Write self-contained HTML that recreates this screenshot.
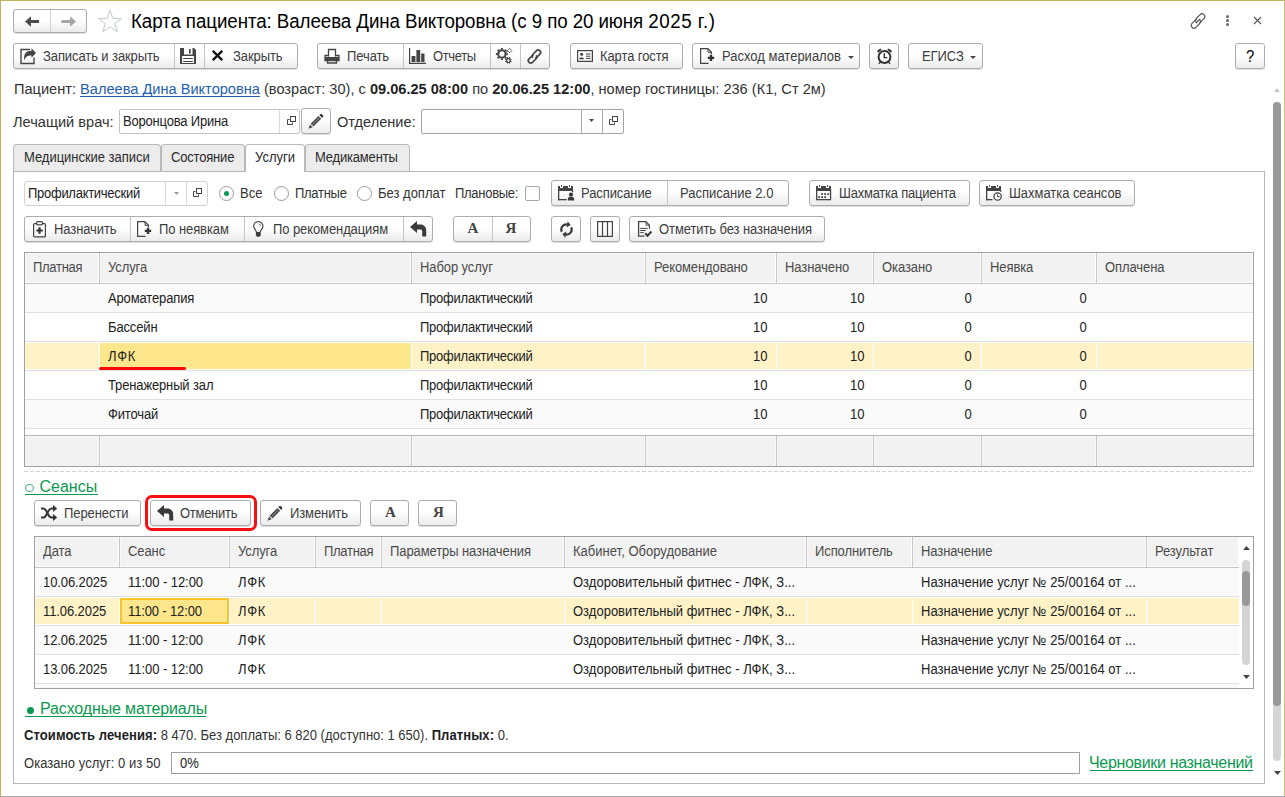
<!DOCTYPE html>
<html lang="ru">
<head>
<meta charset="utf-8">
<title>Карта пациента</title>
<style>
*{box-sizing:border-box;margin:0;padding:0}
html,body{width:1285px;height:797px;overflow:hidden;background:#fff}
body{position:relative;font-family:"Liberation Sans",sans-serif;font-size:13px;color:#333;line-height:1}
.a{position:absolute;white-space:nowrap}
.frame-t{left:0;top:0;width:1285px;height:1px;background:#c1b15c}
.frame-l{left:0;top:0;width:1px;height:797px;background:#c1b15c}
.frame-r{left:1284px;top:0;width:1px;height:796px;background:#cdbf72}
.frame-b{left:0;top:796px;width:1285px;height:1px;background:#a8a8a8}
.b{position:absolute;height:26px;border:1px solid #adadad;border-radius:3px;background:linear-gradient(#fff 0%,#fff 45%,#ebebeb 100%);box-shadow:0 1px 0 rgba(0,0,0,.13);white-space:nowrap}
.b .t{position:absolute;top:5px;font-size:14px;transform:scaleX(.9286);transform-origin:0 0;color:#3c3c3c;letter-spacing:-0.1px}
.b .sep{position:absolute;top:0;width:1px;height:24px;background:#c4c4c4}
.b svg{position:absolute}
.lbl15{font-size:15.4px;transform:scaleX(.948);transform-origin:0 0;color:#333}
.inp{position:absolute;height:25px;border:1px solid #c3c3c3;border-radius:2px;background:#fff}
.inp .t{position:absolute;left:3px;top:4px;font-size:14px;transform:scaleX(.9286);transform-origin:0 0;color:#222;letter-spacing:-0.2px}
.inp .sep{position:absolute;top:0;width:1px;height:23px;background:#dcdcdc}
.tab{position:absolute;top:144px;height:27px;border:1px solid #b9b9b9;border-bottom:none;background:#ececec;font-size:14px;color:#2a2a2a;border-radius:4px 4px 0 0;letter-spacing:-0.2px}
.tab span{position:absolute;white-space:nowrap;top:5px;transform:scaleX(.9286);transform-origin:0 0}
.tab.act{background:#fff;height:28px;z-index:3}
.panel{left:13px;top:171px;width:1252px;height:613px;border:1px solid #b6b6b6}
 .tbl{position:absolute;border:1px solid #a0a0a0;background:#fff;overflow:hidden}
.th{position:absolute;top:0;height:31px;background:#f2f2f2;border-right:1px solid #c6c6c6;border-bottom:1px solid #c6c6c6;box-shadow:inset -1px -1px 0 #fff,inset 1px 1px 0 #f8f8f8;font-size:14px;color:#4a4a4a}
.th span{position:absolute;white-space:nowrap;top:7px;transform:scaleX(.9286);transform-origin:0 0;letter-spacing:-0.1px}
.row{position:absolute;left:0;height:29px;border-bottom:1px solid #e0e0e0}
.row.alt{background:#fafafa}
.c{position:absolute;top:0;height:28px;font-size:14px;letter-spacing:-0.15px;color:#222}
.c span{position:absolute;white-space:nowrap;top:7px;transform:scaleX(.9286);transform-origin:0 0}
.sel .c{top:1px;height:26px;background:#fef2c6}
.sel .c span{top:6px}
.sel .c.cur{background:#fee68d}
.lnk{color:#0a9a4f;font-size:16px}
</style>
</head>
<body>
<div class="a frame-t"></div><div class="a frame-l"></div><div class="a frame-r"></div><div class="a frame-b"></div>
<!--TOP-->
<div class="b" style="left:13px;top:9px;width:74px;height:24px">
  <div class="sep" style="left:36px;height:22px;background:#d2d2d2"></div>
  <svg style="left:11px;top:5.500px" width="15" height="11" viewBox="0 0 15 11"><path d="M0 5.500L6 0.300V4H14V7H6V10.700Z" fill="#4a4a4a"/></svg>
  <svg style="left:46.500px;top:5.500px" width="15" height="11" viewBox="0 0 15 11"><path d="M15 5.5L9 0.3V4H0.5V7H9V10.7Z" fill="#a6a6a6"/></svg>
</div>
<svg class="a" style="left:96.5px;top:9px" width="26" height="25" viewBox="0 0 26 25"><path d="M13 1.5L16 9.6H24.3L17.6 14.6L20.2 22.8L13 17.8L5.8 22.8L8.4 14.6L1.7 9.6H10Z" fill="none" stroke="#c3c8cc" stroke-width="1"/></svg>
<div class="a" style="left:131px;top:12px;font-size:19.6px;transform:scaleX(.9566);transform-origin:0 0;color:#000"><span style="letter-spacing:-0.085px">Карта пациента: Валеева Дина Викторовна (с 9 по 20 июня </span><span style="letter-spacing:0.55px">2025 г.)</span></div>
<!-- window icons -->
<svg class="a" style="left:1188.500px;top:11.500px;overflow:visible" width="18" height="18" viewBox="0 0 17 17"><g transform="rotate(-45 8.500 8.500)" fill="none" stroke="#555" stroke-width="1.100" stroke-linecap="round"><path d="M8.600 6.100H2.900a2.600 2.600 0 0 0 0 5.200H8a2.600 2.600 0 0 0 2.500-1.900"/><path d="M8.400 10.900H14.100a2.600 2.600 0 0 0 0-5.200H9a2.600 2.600 0 0 0-2.500 1.900"/><path d="M6.200 8.500H10.800"/></g></svg>
<div class="a" style="left:1226px;top:15px;width:3px;height:3px;border-radius:2px;background:#666"></div>
<div class="a" style="left:1226px;top:19px;width:3px;height:3px;border-radius:2px;background:#666"></div>
<div class="a" style="left:1226px;top:23px;width:3px;height:3px;border-radius:2px;background:#666"></div>
<svg class="a" style="left:1253px;top:16px" width="9" height="9" viewBox="0 0 9 9"><path d="M1 1L8 8M8 1L1 8" stroke="#555" stroke-width="1.1" fill="none"/></svg>

<!-- toolbar -->
<div class="b" style="left:13px;top:43px;width:285px">
  <svg style="left:6px;top:4px" width="17" height="17" viewBox="0 0 17 17"><path d="M10 1.5H1V15.5H14V9.5" fill="none" stroke="#444" stroke-width="1.4"/><path d="M16 5L11.5 0.3V2.700C6.500 2.700 3.300 5.500 4.300 12.500C5.500 8.800 7.500 7.500 11.500 7.500V9.700Z" fill="#444"/></svg>
  <span class="t" style="left:29px">Записать и закрыть</span>
  <div class="sep" style="left:160px"></div>
  <svg style="left:166px;top:4px" width="16" height="16" viewBox="0 0 16 16"><path d="M0 0H14L16 2V16H0Z" fill="#444"/><rect x="4" y="0" width="8.500" height="6.500" fill="#fff"/><rect x="9" y="1" width="1.700" height="4.500" fill="#444"/><rect x="2" y="8" width="12" height="7" fill="#fff"/><rect x="3.200" y="10" width="9.600" height="1" fill="#444"/><rect x="3.200" y="13" width="9.600" height="1" fill="#444"/></svg>
  <div class="sep" style="left:190px"></div>
  <svg style="left:198px;top:6px" width="11" height="11" viewBox="0 0 11 11"><path d="M0.800 0.800L10.200 10.200M10.200 0.800L0.800 10.200" stroke="#111" stroke-width="2.300" fill="none"/></svg>
  <span class="t" style="left:219px">Закрыть</span>
</div>
<div class="b" style="left:317px;top:43px;width:233px">
  <svg style="left:6px;top:4px" width="16" height="16" viewBox="0 0 16 16"><g fill="none" stroke="#444" stroke-width="1.3"><path d="M4.5 8.5V1.5H11.5V8.5"/><path d="M4.5 7.5H1V12.5H15V7.5H11.5" /><path d="M3.5 12.5V15H12.5V12.5"/></g><rect x="1" y="9" width="14" height="3.5" fill="#444"/></svg>
  <span class="t" style="left:29px">Печать</span>
  <div class="sep" style="left:85px"></div>
  <svg style="left:91px;top:4px" width="17" height="16" viewBox="0 0 17 16"><path d="M0.600 0V15.400H17" fill="none" stroke="#444" stroke-width="1.200"/><rect x="2.600" y="8" width="3.800" height="6" fill="#444"/><rect x="7.400" y="2" width="3.800" height="12" fill="#444"/><rect x="12.200" y="5.500" width="3.300" height="8.500" fill="#444"/></svg>
  <span class="t" style="left:114.500px;letter-spacing:-0.400px">Отчеты</span>
  <div class="sep" style="left:172px"></div>
  <svg style="left:177px;top:4px" width="19" height="17" viewBox="0 0 19 17"><circle cx="6.9" cy="6" r="3.7" fill="none" stroke="#444" stroke-width="2.1"/><path d="M11.30 6.00L12.90 6.00M10.01 9.11L11.14 10.24M6.90 10.40L6.90 12.00M3.79 9.11L2.66 10.24M2.50 6.00L0.90 6.00M3.79 2.89L2.66 1.76M6.90 1.60L6.90 0.00M10.01 2.89L11.14 1.76" stroke="#444" stroke-width="2.0" fill="none"/><circle cx="13.4" cy="12.4" r="1.9" fill="none" stroke="#444" stroke-width="1.3"/><path d="M15.52 13.28L16.54 13.70M14.28 14.52L14.70 15.54M12.52 14.52L12.10 15.54M11.28 13.28L10.26 13.70M11.28 11.52L10.26 11.10M12.52 10.28L12.10 9.26M14.28 10.28L14.70 9.26M15.52 11.52L16.54 11.10" stroke="#444" stroke-width="1.1" fill="none"/><path d="M14.7 0.4L16.9 2.6L14.7 4.8L12.5 2.6Z" fill="none" stroke="#555" stroke-width="0.9"/><path d="M10 4.6L12.8 3" stroke="#444" stroke-width="1"/></svg>
  <div class="sep" style="left:202px"></div>
  <svg style="left:208px;top:4px;overflow:visible" width="17" height="17" viewBox="0 0 17 17"><g transform="rotate(-45 8.500 8.500)" fill="none" stroke="#444" stroke-width="1.700" stroke-linecap="round"><path d="M8.600 6.400H2.900a2.400 2.400 0 0 0 0 4.800H8a2.400 2.400 0 0 0 2.300-1.800"/><path d="M8.400 10.600H14.100a2.400 2.400 0 0 0 0-4.800H9a2.400 2.400 0 0 0-2.300 1.800"/></g></svg>
</div>
<div class="b" style="left:570px;top:43px;width:113px">
  <svg style="left:6px;top:6px" width="16" height="12" viewBox="0 0 16 12"><rect x="0.6" y="0.6" width="14.8" height="10.8" fill="none" stroke="#444" stroke-width="1.2"/><circle cx="4.6" cy="4.3" r="1.5" fill="#444"/><path d="M2.2 9.2C2.2 6.8 7 6.8 7 9.2Z" fill="#444"/><path d="M9 4H13.5M9 6.2H13.5M9 8.4H13.5" stroke="#444" stroke-width="1"/></svg>
  <span class="t" style="left:29px">Карта гостя</span>
</div>
<div class="b" style="left:692px;top:43px;width:168px">
  <svg style="left:7px;top:4px" width="15" height="17" viewBox="0 0 15 17"><path d="M8 0.600H0.600V15.400H8.500" fill="none" stroke="#444" stroke-width="1.200"/><path d="M8 0.600L11.400 4.300V6.300" fill="none" stroke="#444" stroke-width="1.200"/><path d="M8 0.600V4.300H11.400" fill="none" stroke="#444" stroke-width="1"/><path d="M11 6.700V13.100M7.800 9.900H14.200" stroke="#333" stroke-width="2.400"/></svg>
  <span class="t" style="left:29px;letter-spacing:0">Расход материалов</span>
  <svg style="left:154.500px;top:11.500px" width="6" height="3" viewBox="0 0 6 3"><path d="M0 0H6L3 3Z" fill="#444"/></svg>
</div>
<div class="b" style="left:869px;top:43px;width:30px">
  <svg style="left:5.500px;top:4px" width="17" height="17" viewBox="0 0 17 17"><circle cx="8.500" cy="9" r="5.900" fill="none" stroke="#333" stroke-width="2"/><path d="M8.300 5.300V9.600H11.300" fill="none" stroke="#333" stroke-width="1.400"/><path d="M1.800 4.200Q2.800 1.800 5.300 1.500M15.200 4.200Q14.200 1.800 11.700 1.500" stroke="#333" stroke-width="2.200" fill="none"/><path d="M4.600 13.600L3 15.800M12.400 13.600L14 15.800" stroke="#333" stroke-width="1.300"/></svg>
</div>
<div class="b" style="left:908px;top:43px;width:75px">
  <span class="t" style="left:13px">ЕГИСЗ</span>
  <svg style="left:60.500px;top:11.500px" width="6" height="3" viewBox="0 0 6 3"><path d="M0 0H6L3 3Z" fill="#444"/></svg>
</div>
<div class="b" style="left:1235px;top:43px;width:30px">
  <span class="t" style="left:10px;top:5px;font-size:16px;color:#000;letter-spacing:0">?</span>
</div>

<!--FORM-->
<div class="a" style="left:14px;top:81px;font-size:15.4px;transform:scaleX(.948);transform-origin:0 0;color:#333">Пациент: <span style="color:#1f5fb0;text-decoration:underline;text-decoration-skip-ink:none;text-decoration-thickness:1px;text-underline-offset:2px">Валеева Дина Викторовна</span> (возраст: 30), с <b style="color:#222">09.06.25 08:00</b> по <b style="color:#222">20.06.25 12:00</b>, номер гостиницы: 236 (К1, Ст 2м)</div>
<div class="a lbl15" style="left:13px;top:114px">Лечащий врач:</div>
<div class="inp" style="left:119px;top:109px;width:181px">
  <span class="t">Воронцова Ирина</span>
  <div class="sep" style="left:159px"></div>
  <svg style="position:absolute;left:167px;top:6px" width="10" height="10" viewBox="0 0 10 10"><rect x="3.5" y="0.5" width="5" height="5" fill="none" stroke="#444" stroke-width="1"/><path d="M2.5 3.5H0.5V8.5H5.5V6.5" fill="none" stroke="#444" stroke-width="1"/></svg>
</div>
<div class="b" style="left:301px;top:108px;width:30px">
  <svg style="left:5px;top:4px" width="17" height="17" viewBox="0 0 17 17"><path d="M3.600 10.800L11.400 3L14.200 5.800L6.400 13.600Z" fill="#4a4a4a"/><path d="M5.300 11.900L12.500 4.700" stroke="#a8a8a8" stroke-width="0.800"/><path d="M3 11.600L5.600 14.200L1.500 15.700Z" fill="#4a4a4a"/><path d="M12.300 2.100L13.200 1.200a1.200 1.200 0 0 1 1.700 0L16 2.300a1.200 1.200 0 0 1 0 1.700L15.100 4.900Z" fill="#3a3a3a"/></svg>
</div>
<div class="a lbl15" style="left:337px;top:114px">Отделение:</div>
<div class="inp" style="left:421px;top:109px;width:203px;border-color:#a3a3a3">
  <div class="sep" style="left:159px;background:#a9a9a9"></div>
  <svg style="position:absolute;left:167px;top:9px" width="5" height="3" viewBox="0 0 5 3"><path d="M0 0H5L2.5 3Z" fill="#444"/></svg>
  <div class="sep" style="left:180px;background:#a9a9a9"></div>
  <svg style="position:absolute;left:187px;top:6px" width="10" height="10" viewBox="0 0 10 10"><rect x="3.5" y="0.5" width="5" height="5" fill="none" stroke="#444" stroke-width="1"/><path d="M2.5 3.5H0.5V8.5H5.5V6.5" fill="none" stroke="#444" stroke-width="1"/></svg>
</div>

<!--TABS-->
<div class="a panel"></div>
<div class="tab" style="left:13px;width:148px"><span style="left:10px;letter-spacing:-0.03px">Медицинские записи</span></div>
<div class="tab" style="left:161px;width:84px"><span style="left:9px">Состояние</span></div>
<div class="tab act" style="left:245px;width:60px"><span style="left:9px;letter-spacing:0">Услуги</span></div>
<div class="tab" style="left:305px;width:105px"><span style="left:9px">Медикаменты</span></div>

<!-- filter row -->
<div class="inp" style="left:24px;top:181px;width:184px;border-color:#d2d2d2;border-radius:3px">
  <span class="t" style="left:3px;letter-spacing:-0.3px">Профилактический</span>
  <div class="sep" style="left:140px"></div>
  <svg style="position:absolute;left:149px;top:10px" width="5" height="3" viewBox="0 0 5 3"><path d="M0 0H5L2.5 3Z" fill="#9a9a9a"/></svg>
  <div class="sep" style="left:161px"></div>
  <svg style="position:absolute;left:168px;top:6px" width="10" height="10" viewBox="0 0 10 10"><rect x="3.5" y="0.5" width="5" height="5" fill="none" stroke="#444" stroke-width="1"/><path d="M2.5 3.5H0.5V8.5H5.5V6.5" fill="none" stroke="#444" stroke-width="1"/></svg>
</div>
<div class="a" style="left:219px;top:186px;width:15px;height:15px;border:1px solid #9a9a9a;border-radius:8px;background:#fff"></div>
<div class="a" style="left:224px;top:191px;width:5px;height:5px;border-radius:3px;background:#0a9a4f"></div>
<div class="a" style="left:240px;top:186px;font-size:14px;transform:scaleX(.9286);transform-origin:0 0;color:#333">Все</div>
<div class="a" style="left:274px;top:186px;width:15px;height:15px;border:1px solid #9a9a9a;border-radius:8px;background:#fff"></div>
<div class="a" style="left:295px;top:186px;font-size:14px;transform:scaleX(.9286);transform-origin:0 0;color:#333;letter-spacing:-0.3px">Платные</div>
<div class="a" style="left:357px;top:186px;width:15px;height:15px;border:1px solid #9a9a9a;border-radius:8px;background:#fff"></div>
<div class="a" style="left:378px;top:186px;font-size:14px;transform:scaleX(.9286);transform-origin:0 0;color:#333">Без доплат</div>
<div class="a" style="left:455px;top:186px;font-size:14px;transform:scaleX(.9286);transform-origin:0 0;color:#333;letter-spacing:-0.3px">Плановые:</div>
<div class="a" style="left:525px;top:186px;width:15px;height:15px;border:1px solid #a6a6a6;border-radius:2px;background:#fff"></div>
<div class="b" style="left:551px;top:180px;width:238px">
  <svg style="left:6px;top:4px;overflow:visible" width="17" height="16" viewBox="0 0 17 16"><g shape-rendering="crispEdges"><path d="M0 1H2V3H5V1H10V3H13V1H15V5.500H0Z" fill="#444"/><rect x="3" y="0" width="1" height="2" fill="#555"/><rect x="11" y="0" width="1" height="2" fill="#555"/></g><rect x="0" y="5" width="1.300" height="10.300" fill="#444"/><rect x="0" y="14" width="8.800" height="1.300" fill="#444"/><rect x="13.900" y="5" width="1.300" height="2.300" fill="#444"/><circle cx="13" cy="9.700" r="2.100" fill="#3a3a3a"/><path d="M9.900 15.600V13.800Q9.900 12.100 11.600 12.100H14.400Q16.100 12.100 16.100 13.800V15.600Z" fill="#3a3a3a"/></svg>
  <span class="t" style="left:29px">Расписание</span>
  <div class="sep" style="left:115px"></div>
  <span class="t" style="left:128px;letter-spacing:0">Расписание 2.0</span>
</div>
<div class="b" style="left:809px;top:180px;width:161px">
  <svg style="left:6px;top:4px;overflow:visible" width="16" height="16" viewBox="0 0 16 16"><g shape-rendering="crispEdges"><path d="M0 1H2V3H5V1H10V3H13V1H15V5.500H0Z" fill="#444"/><rect x="3" y="0" width="1" height="2" fill="#555"/><rect x="11" y="0" width="1" height="2" fill="#555"/></g><rect x="0.650" y="5" width="13.900" height="9.650" fill="none" stroke="#444" stroke-width="1.300"/><rect x="5.2" y="8.2" width="1.700" height="1.700" fill="#333"/><rect x="8.3" y="8.2" width="1.700" height="1.700" fill="#333"/><rect x="11.4" y="8.2" width="1.700" height="1.700" fill="#333"/><rect x="2.3" y="11.3" width="1.700" height="1.700" fill="#333"/><rect x="5.2" y="11.3" width="1.700" height="1.700" fill="#333"/><rect x="8.3" y="11.3" width="1.700" height="1.700" fill="#333"/></svg>
  <span class="t" style="left:29px;letter-spacing:-0.25px">Шахматка пациента</span>
</div>
<div class="b" style="left:979px;top:180px;width:156px">
  <svg style="left:6px;top:4px;overflow:visible" width="17" height="17" viewBox="0 0 17 17"><g shape-rendering="crispEdges"><path d="M0 1H2V3H5V1H10V3H13V1H15V5.500H0Z" fill="#444"/><rect x="3" y="0" width="1" height="2" fill="#555"/><rect x="11" y="0" width="1" height="2" fill="#555"/></g><rect x="0" y="5" width="1.300" height="10.300" fill="#444"/><rect x="0" y="14" width="6.600" height="1.300" fill="#444"/><rect x="13.900" y="5" width="1.300" height="1.800" fill="#444"/><circle cx="11.600" cy="11.500" r="3.700" fill="#fff" fill-opacity="0.600" stroke="#3a3a3a" stroke-width="1.200"/><path d="M11.600 9.300V11.700H13.600" fill="none" stroke="#3a3a3a" stroke-width="1"/></svg>
  <span class="t" style="left:29px;letter-spacing:-0.05px">Шахматка сеансов</span>
</div>

<!-- action row -->
<div class="b" style="left:24px;top:216px;width:409px">
  <svg style="left:8px;top:4px" width="13" height="17" viewBox="0 0 13 17"><rect x="0.600" y="2.600" width="11.800" height="13.300" rx="1" fill="none" stroke="#444" stroke-width="1.200"/><rect x="3.600" y="0.600" width="5.800" height="3.200" rx="1" fill="#fff" stroke="#444" stroke-width="1.200"/><path d="M6.500 6.300V12.700M3.300 9.500H9.700" stroke="#333" stroke-width="2.200"/></svg>
  <span class="t" style="left:29px">Назначить</span>
  <div class="sep" style="left:105px"></div>
  <svg style="left:112px;top:4px" width="15" height="17" viewBox="0 0 15 17"><path d="M8 0.600H0.600V15.400H8.500" fill="none" stroke="#444" stroke-width="1.200"/><path d="M8 0.600L11.400 4.300V6.300" fill="none" stroke="#444" stroke-width="1.200"/><path d="M8 0.600V4.300H11.400" fill="none" stroke="#444" stroke-width="1"/><path d="M11 6.700V13.100M7.800 9.900H14.200" stroke="#333" stroke-width="2.400"/></svg>
  <span class="t" style="left:134px">По неявкам</span>
  <div class="sep" style="left:219px"></div>
  <svg style="left:227.500px;top:3.500px;overflow:visible" width="11" height="17" viewBox="0 0 11 17"><path d="M3.300 11.200C3.300 8.800 0.700 8 0.700 5.200A4.600 4.600 0 0 1 9.900 5.200C9.900 8 7.300 8.800 7.300 11.200" fill="none" stroke="#444" stroke-width="1.200"/><path d="M2.900 11H7.700V14.200L6.500 15.800H4.100L2.900 14.200Z" fill="#3c3c3c"/><path d="M5.900 2.600L7.700 4.800" stroke="#555" stroke-width="0.900" fill="none"/></svg>
  <span class="t" style="left:248px">По рекомендациям</span>
  <div class="sep" style="left:378px"></div>
  <svg style="left:384.500px;top:3.500px;overflow:visible" width="17" height="16" viewBox="0 0 17 16"><path d="M0 6L7 0V3.400H10.500C14 3.400 16.200 5.800 16.200 9.500V15.500H12.200V10.200C12.200 9 11.400 8.400 10.300 8.400H7V12Z" fill="#3a3a3a"/></svg>
</div>
<div class="b" style="left:453px;top:216px;width:78px">
  <span class="t" style="left:13.500px;top:4px;font-family:'Liberation Serif',serif;font-weight:bold;font-size:15px;transform:none;letter-spacing:0;color:#444">А</span>
  <div class="sep" style="left:38px"></div>
  <span class="t" style="left:51.500px;top:4px;font-family:'Liberation Serif',serif;font-weight:bold;font-size:15px;transform:none;letter-spacing:0;color:#444">Я</span>
</div>
<div class="b" style="left:551px;top:216px;width:30px">
  <svg style="left:6.500px;top:3.500px;overflow:visible" width="15" height="17" viewBox="0 0 15 17"><path d="M2.79 10.70A5.2 5.2 0 0 1 8.40 3.38M12.21 6.30A5.2 5.2 0 0 1 6.60 13.62" fill="none" stroke="#3a3a3a" stroke-width="2.200"/><path d="M11.65 3.95L8.65 0.27L7.57 6.38ZM3.35 13.05L6.35 16.73L7.43 10.62Z" fill="#3a3a3a"/></svg>
</div>
<div class="b" style="left:590px;top:216px;width:30px">
  <svg style="left:6px;top:4px" width="16" height="16" viewBox="0 0 16 16"><rect x="0.600" y="0.600" width="14.800" height="14.800" fill="none" stroke="#444" stroke-width="1.2"/><path d="M5.500 0.600V15.400M10.500 0.600V15.400" stroke="#444" stroke-width="1.200"/></svg>
</div>
<div class="b" style="left:629px;top:216px;width:196px">
  <svg style="left:8px;top:4px;overflow:visible" width="15" height="17" viewBox="0 0 15 17"><path d="M8 0.600H0.600V15.200H6.500" fill="none" stroke="#444" stroke-width="1.300"/><path d="M8 0.600L11.400 4.200V7.700" fill="none" stroke="#444" stroke-width="1.200"/><path d="M8 0.600V4.200H11.400" fill="none" stroke="#444" stroke-width="1"/><path d="M2.200 7.400H9.800M2.200 9.500H7.800M2.200 11.600H5.800" stroke="#444" stroke-width="1"/><path d="M7.200 12.300L9.500 14.800L13.400 10.500" fill="none" stroke="#333" stroke-width="2"/></svg>
  <span class="t" style="left:29px">Отметить без назначения</span>
</div>

<!--TABLE1-->
<div class="tbl" style="left:24px;top:252px;width:1230px;height:215px">
<div class="th" style="left:0px;width:75px"><span style="left:8px;letter-spacing:-0.3px">Платная</span></div>
<div class="th" style="left:75px;width:312px"><span style="left:8px">Услуга</span></div>
<div class="th" style="left:387px;width:234px"><span style="left:8px">Набор услуг</span></div>
<div class="th" style="left:621px;width:131px"><span style="left:8px">Рекомендовано</span></div>
<div class="th" style="left:752px;width:97px"><span style="left:8px">Назначено</span></div>
<div class="th" style="left:849px;width:108px"><span style="left:8px">Оказано</span></div>
<div class="th" style="left:957px;width:115px"><span style="left:8px">Неявка</span></div>
<div class="th" style="left:1072px;width:156px;border-right:none"><span style="left:8px">Оплачена</span></div>
<div class="row alt" style="top:31px;width:1228px">
<div class="c" style="left:75px;width:311px"><span style="left:8px">Ароматерапия</span></div>
<div class="c" style="left:387px;width:233px"><span style="left:8px;letter-spacing:-0.25px">Профилактический</span></div>
<div class="c" style="left:621px;width:130px"><span style="right:9px;transform-origin:100% 0">10</span></div>
<div class="c" style="left:752px;width:96px"><span style="right:9px;transform-origin:100% 0">10</span></div>
<div class="c" style="left:849px;width:107px"><span style="right:9px;transform-origin:100% 0">0</span></div>
<div class="c" style="left:957px;width:114px"><span style="right:9px;transform-origin:100% 0">0</span></div>
</div>
<div class="row" style="top:60px;width:1228px">
<div class="c" style="left:75px;width:311px"><span style="left:8px">Бассейн</span></div>
<div class="c" style="left:387px;width:233px"><span style="left:8px;letter-spacing:-0.25px">Профилактический</span></div>
<div class="c" style="left:621px;width:130px"><span style="right:9px;transform-origin:100% 0">10</span></div>
<div class="c" style="left:752px;width:96px"><span style="right:9px;transform-origin:100% 0">10</span></div>
<div class="c" style="left:849px;width:107px"><span style="right:9px;transform-origin:100% 0">0</span></div>
<div class="c" style="left:957px;width:114px"><span style="right:9px;transform-origin:100% 0">0</span></div>
</div>
<div class="row sel" style="top:89px;width:1228px">
<div class="c" style="left:0px;width:74px"></div>
<div class="c cur" style="left:75px;width:311px"><span style="left:8px;letter-spacing:0.8px">ЛФК</span></div>
<div class="c" style="left:387px;width:233px"><span style="left:8px;letter-spacing:-0.25px">Профилактический</span></div>
<div class="c" style="left:621px;width:130px"><span style="right:9px;transform-origin:100% 0">10</span></div>
<div class="c" style="left:752px;width:96px"><span style="right:9px;transform-origin:100% 0">10</span></div>
<div class="c" style="left:849px;width:107px"><span style="right:9px;transform-origin:100% 0">0</span></div>
<div class="c" style="left:957px;width:114px"><span style="right:9px;transform-origin:100% 0">0</span></div>
<div class="c" style="left:1072px;width:156px"></div>
</div>
<div class="row" style="top:118px;width:1228px">
<div class="c" style="left:75px;width:311px"><span style="left:8px">Тренажерный зал</span></div>
<div class="c" style="left:387px;width:233px"><span style="left:8px;letter-spacing:-0.25px">Профилактический</span></div>
<div class="c" style="left:621px;width:130px"><span style="right:9px;transform-origin:100% 0">10</span></div>
<div class="c" style="left:752px;width:96px"><span style="right:9px;transform-origin:100% 0">10</span></div>
<div class="c" style="left:849px;width:107px"><span style="right:9px;transform-origin:100% 0">0</span></div>
<div class="c" style="left:957px;width:114px"><span style="right:9px;transform-origin:100% 0">0</span></div>
</div>
<div class="row alt" style="top:147px;width:1228px">
<div class="c" style="left:75px;width:311px"><span style="left:8px">Фиточай</span></div>
<div class="c" style="left:387px;width:233px"><span style="left:8px;letter-spacing:-0.25px">Профилактический</span></div>
<div class="c" style="left:621px;width:130px"><span style="right:9px;transform-origin:100% 0">10</span></div>
<div class="c" style="left:752px;width:96px"><span style="right:9px;transform-origin:100% 0">10</span></div>
<div class="c" style="left:849px;width:107px"><span style="right:9px;transform-origin:100% 0">0</span></div>
<div class="c" style="left:957px;width:114px"><span style="right:9px;transform-origin:100% 0">0</span></div>
</div>
<div class="a" style="left:0;top:182px;width:1228px;height:31px;background:#f2f2f2;border-top:1px solid #b4b4b4;box-shadow:inset 0 1px 0 #fafafa"></div>
<div class="a" style="left:73px;top:183px;width:3px;height:30px;background:#f9f9f9"></div><div class="a" style="left:74px;top:183px;width:1px;height:30px;background:#c6c6c6"></div>
<div class="a" style="left:385px;top:183px;width:3px;height:30px;background:#f9f9f9"></div><div class="a" style="left:386px;top:183px;width:1px;height:30px;background:#c6c6c6"></div>
<div class="a" style="left:619px;top:183px;width:3px;height:30px;background:#f9f9f9"></div><div class="a" style="left:620px;top:183px;width:1px;height:30px;background:#c6c6c6"></div>
<div class="a" style="left:750px;top:183px;width:3px;height:30px;background:#f9f9f9"></div><div class="a" style="left:751px;top:183px;width:1px;height:30px;background:#c6c6c6"></div>
<div class="a" style="left:847px;top:183px;width:3px;height:30px;background:#f9f9f9"></div><div class="a" style="left:848px;top:183px;width:1px;height:30px;background:#c6c6c6"></div>
<div class="a" style="left:955px;top:183px;width:3px;height:30px;background:#f9f9f9"></div><div class="a" style="left:956px;top:183px;width:1px;height:30px;background:#c6c6c6"></div>
<div class="a" style="left:1070px;top:183px;width:3px;height:30px;background:#f9f9f9"></div><div class="a" style="left:1071px;top:183px;width:1px;height:30px;background:#c6c6c6"></div>
</div>
<div class="a" style="left:99px;top:367px;width:87px;height:3px;background:#fb0808;border-radius:2px"></div>
<svg class="a" style="left:24px;top:471px" width="1230" height="1"><path d="M0 0.5H1230" stroke="#d2d2d2" stroke-width="1" stroke-dasharray="4 2"/></svg>
<!--/TABLE1-->
<!--SESS-->
<div class="a lnk" style="left:25px;top:479px;width:73px;height:18px"><span style="position:absolute;left:14.5px;top:0">Сеансы</span><span style="position:absolute;left:0;top:5px;width:9px;height:8px;border:1px solid #3fae74;border-radius:4.5px/4px"></span><span style="position:absolute;left:0;top:15px;width:73px;height:1px;background:#0a9a4f"></span></div>
<div class="b" style="left:34px;top:500px;width:107px">
  <svg style="left:6px;top:4px;overflow:visible" width="17" height="16" viewBox="0 0 17 16"><g fill="none" stroke="#333" stroke-width="2"><path d="M0 3.500H2.500C6 3.500 6.500 12.500 10.500 12.500H13"/><path d="M0 12.500H2.500C6 12.500 6.500 3.500 10.500 3.500H13"/></g><path d="M12 0L16.200 3.500L12 7Z" fill="#333"/><path d="M12 9L16.200 12.500L12 16Z" fill="#333"/></svg>
  <span class="t" style="left:29px">Перенести</span>
</div>
<div class="a" style="left:145px;top:495px;width:112px;height:36px;border:3px solid #f70f12;border-radius:7px"></div>
<div class="b" style="left:150px;top:500px;width:101px">
  <svg style="left:6px;top:3.500px;overflow:visible" width="17" height="16" viewBox="0 0 17 16"><path d="M0 6L7 0V3.400H10.500C14 3.400 16.200 5.800 16.200 9.500V15.500H12.200V10.200C12.200 9 11.400 8.400 10.300 8.400H7V12Z" fill="#3a3a3a"/></svg>
  <span class="t" style="left:29px;letter-spacing:-0.3px">Отменить</span>
</div>
<div class="b" style="left:260px;top:500px;width:101px">
  <svg style="left:5px;top:4px" width="17" height="17" viewBox="0 0 17 17"><path d="M3.600 10.800L11.400 3L14.200 5.800L6.400 13.600Z" fill="#4a4a4a"/><path d="M5.300 11.900L12.500 4.700" stroke="#a8a8a8" stroke-width="0.800"/><path d="M3 11.600L5.600 14.200L1.500 15.700Z" fill="#4a4a4a"/><path d="M12.300 2.100L13.200 1.200a1.200 1.200 0 0 1 1.700 0L16 2.300a1.200 1.200 0 0 1 0 1.700L15.100 4.900Z" fill="#3a3a3a"/></svg>
  <span class="t" style="left:29px">Изменить</span>
</div>
<div class="b" style="left:370px;top:500px;width:39px">
  <span class="t" style="left:14px;top:4px;font-family:'Liberation Serif',serif;font-weight:bold;font-size:15px;transform:none;letter-spacing:0;color:#444">А</span>
</div>
<div class="b" style="left:418px;top:500px;width:39px">
  <span class="t" style="left:14px;top:4px;font-family:'Liberation Serif',serif;font-weight:bold;font-size:15px;transform:none;letter-spacing:0;color:#444">Я</span>
</div>

<!--TABLE2-->
<div class="tbl" style="left:34px;top:536px;width:1220px;height:153px">
<div class="th" style="left:0px;width:85px"><span style="left:8px">Дата</span></div>
<div class="th" style="left:85px;width:110px"><span style="left:8px">Сеанс</span></div>
<div class="th" style="left:195px;width:86px"><span style="left:8px">Услуга</span></div>
<div class="th" style="left:281px;width:66px"><span style="left:8px;letter-spacing:-0.3px">Платная</span></div>
<div class="th" style="left:347px;width:183px"><span style="left:8px">Параметры назначения</span></div>
<div class="th" style="left:530px;width:242px"><span style="left:8px;letter-spacing:0.02px">Кабинет, Оборудование</span></div>
<div class="th" style="left:772px;width:106px"><span style="left:8px">Исполнитель</span></div>
<div class="th" style="left:878px;width:234px"><span style="left:8px">Назначение</span></div>
<div class="th" style="left:1112px;width:92px;border-right:none"><span style="left:8px">Результат</span></div>
<div class="row alt" style="top:31px;width:1204px">
<div class="c" style="left:0px;width:84px"><span style="left:8px;letter-spacing:-0.1px">10.06.2025</span></div>
<div class="c" style="left:85px;width:109px"><span style="left:8px;letter-spacing:-0.05px">11:00 - 12:00</span></div>
<div class="c" style="left:195px;width:85px"><span style="left:8px;letter-spacing:0.8px">ЛФК</span></div>
<div class="c" style="left:530px;width:241px"><span style="left:8px;letter-spacing:0.01px">Оздоровительный фитнес - ЛФК, З...</span></div>
<div class="c" style="left:878px;width:233px"><span style="left:8px;letter-spacing:0.03px">Назначение услуг № 25/00164 от ...</span></div>
</div>
<div class="row sel" style="top:60px;width:1204px">
<div class="c" style="left:0px;width:84px"><span style="left:8px;letter-spacing:-0.1px">11.06.2025</span></div>
<div class="c cur" style="left:85px;width:109px"><span style="left:8px;letter-spacing:-0.05px">11:00 - 12:00</span></div>
<div class="c" style="left:195px;width:85px"><span style="left:8px;letter-spacing:0.8px">ЛФК</span></div>
<div class="c" style="left:281px;width:65px"></div>
<div class="c" style="left:347px;width:182px"></div>
<div class="c" style="left:530px;width:241px"><span style="left:8px;letter-spacing:0.01px">Оздоровительный фитнес - ЛФК, З...</span></div>
<div class="c" style="left:772px;width:105px"></div>
<div class="c" style="left:878px;width:233px"><span style="left:8px;letter-spacing:0.03px">Назначение услуг № 25/00164 от ...</span></div>
<div class="c" style="left:1112px;width:92px"></div>
</div>
<div class="row alt" style="top:89px;width:1204px">
<div class="c" style="left:0px;width:84px"><span style="left:8px;letter-spacing:-0.1px">12.06.2025</span></div>
<div class="c" style="left:85px;width:109px"><span style="left:8px;letter-spacing:-0.05px">11:00 - 12:00</span></div>
<div class="c" style="left:195px;width:85px"><span style="left:8px;letter-spacing:0.8px">ЛФК</span></div>
<div class="c" style="left:530px;width:241px"><span style="left:8px;letter-spacing:0.01px">Оздоровительный фитнес - ЛФК, З...</span></div>
<div class="c" style="left:878px;width:233px"><span style="left:8px;letter-spacing:0.03px">Назначение услуг № 25/00164 от ...</span></div>
</div>
<div class="row" style="top:118px;width:1204px">
<div class="c" style="left:0px;width:84px"><span style="left:8px;letter-spacing:-0.1px">13.06.2025</span></div>
<div class="c" style="left:85px;width:109px"><span style="left:8px;letter-spacing:-0.05px">11:00 - 12:00</span></div>
<div class="c" style="left:195px;width:85px"><span style="left:8px;letter-spacing:0.8px">ЛФК</span></div>
<div class="c" style="left:530px;width:241px"><span style="left:8px;letter-spacing:0.01px">Оздоровительный фитнес - ЛФК, З...</span></div>
<div class="c" style="left:878px;width:233px"><span style="left:8px;letter-spacing:0.03px">Назначение услуг № 25/00164 от ...</span></div>
</div>
<div class="row alt" style="top:147px;width:1204px">
</div>
<div class="a" style="left:1204px;top:0;width:14px;height:151px;background:#fff"></div>
<svg class="a" style="left:1208px;top:9px" width="7" height="4" viewBox="0 0 7 4"><path d="M0 4H7L3.5 0Z" fill="#444"/></svg>
<svg class="a" style="left:1208px;top:138px" width="7" height="4" viewBox="0 0 7 4"><path d="M0 0H7L3.5 4Z" fill="#444"/></svg>
<div class="a" style="left:1207px;top:23px;width:8px;height:105px;border-radius:4px;background:#d4d4d4"></div>
<div class="a" style="left:1207px;top:34px;width:8px;height:35px;border-radius:4px;background:#999"></div>
<div class="a" style="left:85px;top:61px;width:109px;height:26px;border:2px solid #f6c42c;background:#fee68d"></div>
<div class="a" style="left:93px;top:67px;font-size:14px;transform:scaleX(.9286);transform-origin:0 0;letter-spacing:-0.15px;color:#222">11:00 - 12:00</div>
</div>
<!--/TABLE2-->
<!--FOOT-->
<div class="a lnk" style="left:25px;top:701px;width:181px;height:18px"><span style="position:absolute;left:15px;top:0;letter-spacing:-0.13px">Расходные материалы</span><span style="position:absolute;left:1.500px;top:5.500px;width:7px;height:7px;background:#0a9a4f;border-radius:3.500px"></span><span style="position:absolute;left:0;top:15px;width:181px;height:1px;background:#0a9a4f"></span></div>
<div class="a" style="left:24px;top:728px;font-size:14px;transform:scaleX(.9286);transform-origin:0 0;color:#333"><b style="color:#222;letter-spacing:0.1px">Стоимость лечения:</b> 8 470. Без доплаты: 6 820 (доступно: 1 650). <b style="color:#222;letter-spacing:0.1px">Платных:</b> 0.</div>
<div class="a" style="left:24px;top:756px;font-size:14px;transform:scaleX(.9286);transform-origin:0 0;color:#333;letter-spacing:0.05px">Оказано услуг: 0 из 50</div>
<div class="a" style="left:171px;top:752px;width:909px;height:22px;border:1px solid #a0a0a0;background:#fff"></div>
<div class="a" style="left:180px;top:756px;font-size:14px;transform:scaleX(.9286);transform-origin:0 0;color:#222">0%</div>
<div class="a lnk" style="left:1089px;top:755px;letter-spacing:-0.33px;text-decoration:none">Черновики назначений<span style="position:absolute;left:1px;top:15px;width:163px;height:1px;background:#0a9a4f"></span></div>
<!--SCROLL-->
<svg class="a" style="left:1274px;top:88px" width="6" height="4" viewBox="0 0 6 4"><path d="M0 4H6L3 0Z" fill="#c8c8c8"/></svg>
<div class="a" style="left:1273px;top:102px;width:8px;height:659px;border-radius:4px;background:#d5d5d5"></div>
<div class="a" style="left:1273px;top:102px;width:8px;height:604px;border-radius:4px;background:#999"></div>
<svg class="a" style="left:1274px;top:771px" width="7" height="4" viewBox="0 0 7 4"><path d="M0 0H7L3.500 4Z" fill="#444"/></svg>

</body>
</html>
